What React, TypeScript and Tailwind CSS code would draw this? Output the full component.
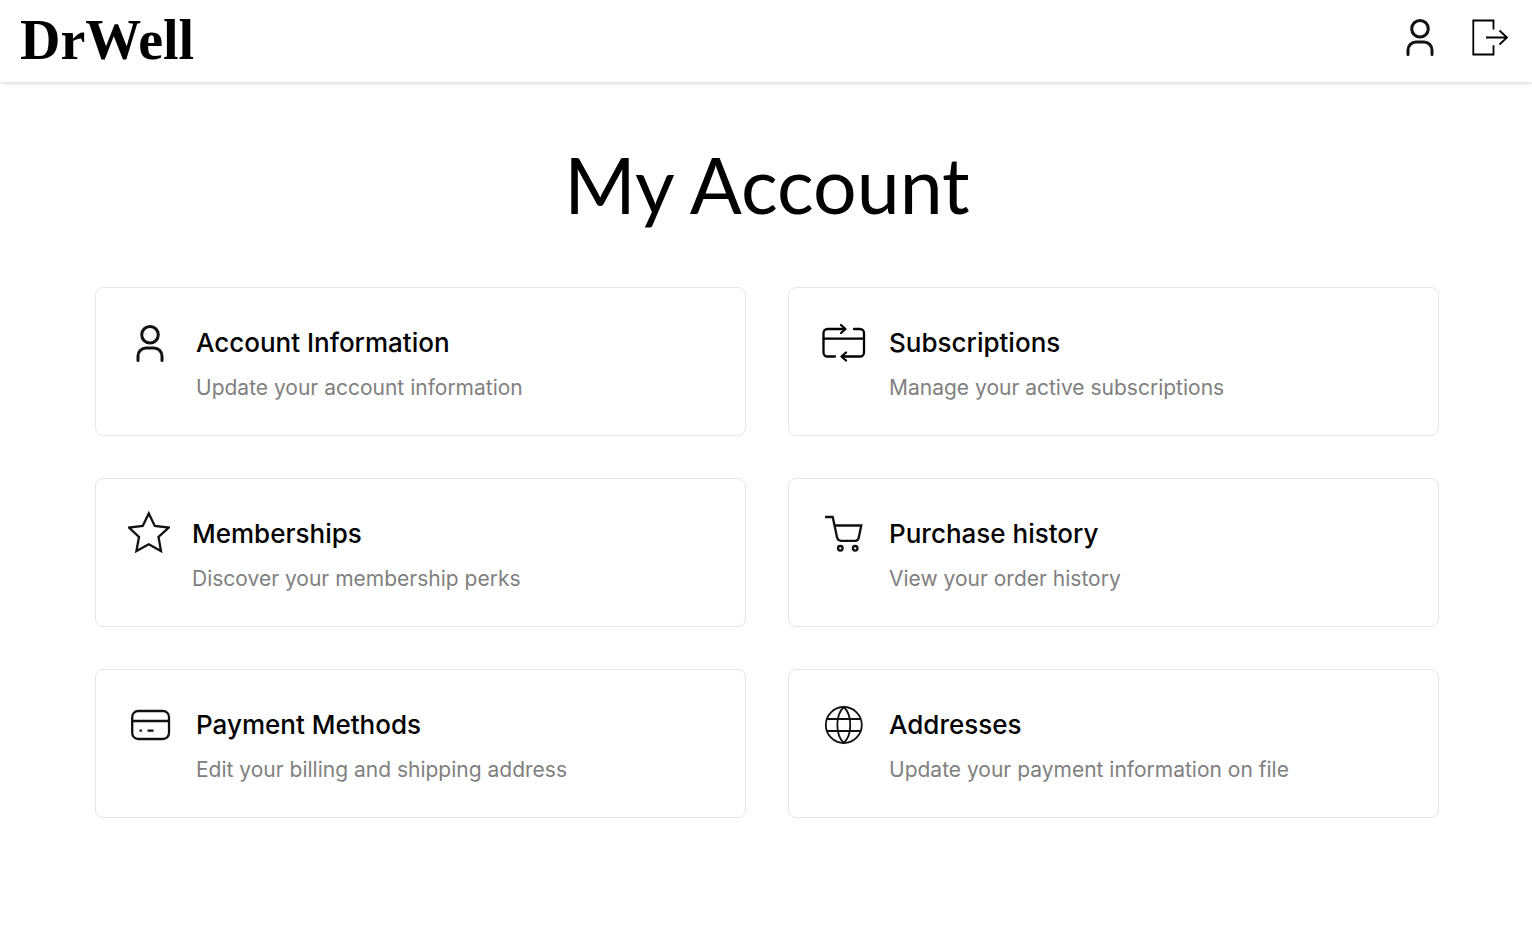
import type { ReactNode, SVGProps } from 'react';

const Icon = ({ children, ...props }: SVGProps<SVGSVGElement> & { children: ReactNode }) => (
  <svg
    viewBox="0 0 46 46"
    fill="none"
    stroke="#111111"
    strokeWidth="2.3"
    aria-hidden="true"
    className="size-[46px] shrink-0"
    {...props}
  >
    {children}
  </svg>
);

const UserIcon = () => (
  <Icon strokeWidth="3" strokeLinecap="round">
    <circle cx="22" cy="14.7" r="8.3" />
    <path d="M10 40.5v-4.5a8 8 0 0 1 8-8h8a8 8 0 0 1 8 8v4.5" />
  </Icon>
);

const LogoutIcon = () => (
  <Icon strokeWidth="1.8" stroke="#000000">
    <path d="M25.5 15.5V6.5H5.3v34h20.2v-9.3" />
    <path d="M18 23.5h21M31.5 16.5l7.5 7-7.5 7" />
  </Icon>
);

const SubscriptionIcon = () => (
  <Icon stroke="#000000" strokeLinecap="round" strokeLinejoin="round">
    <path d="M23.5 9H6.5a4 4 0 0 0-4 4v19.5a4 4 0 0 0 4 4h7.5" />
    <path d="M33 9h6a4 4 0 0 1 4 4v19.5a4 4 0 0 1-4 4H22" />
    <path d="M2.5 18.7h40.5M20 5l4.5 4-4.5 4M25 32.5l-4.5 4 4.5 4" />
  </Icon>
);

const StarIcon = () => (
  <Icon viewBox="0 0 42 42" className="size-[42px] shrink-0">
    <path d="M20.8 2.4l6 12.6 14 1.6-10.3 9.4 2.5 14.1-12.2-6.8-12.4 6.8L11 26 .9 16.6l13.8-1.6z" />
  </Icon>
);

const CartIcon = () => (
  <Icon>
    <path d="M4 6h7.7l4.4 20.6a4 4 0 0 0 3.9 3.2h14.2a3.6 3.6 0 0 0 3.5-3l2.6-12.3H13.3" />
    <circle cx="19.3" cy="37.3" r="2.3" />
    <circle cx="34.2" cy="37.3" r="2.3" />
  </Icon>
);

const CardIcon = () => (
  <Icon>
    <rect x="4.2" y="9" width="36.8" height="28" rx="6" />
    <path d="M4.2 19h36.8" />
    <path d="M11.5 28.6h2.4M19.5 28.6h6" />
  </Icon>
);

const GlobeIcon = () => (
  <Icon strokeWidth="1.8">
    <circle cx="22.8" cy="23" r="18" />
    <path d="M22.8 5c-8.6 8-8.6 28 0 36 8.6-8 8.6-28 0-36z" />
    <path d="M6 17h33.6M6 29h33.6" />
  </Icon>
);

const links = [
  { title: 'Account Information', text: 'Update your account information', icon: UserIcon },
  { title: 'Subscriptions', text: 'Manage your active subscriptions', icon: SubscriptionIcon },
  { title: 'Memberships', text: 'Discover your membership perks', icon: StarIcon },
  { title: 'Purchase history', text: 'View your order history', icon: CartIcon },
  { title: 'Payment Methods', text: 'Edit your billing and shipping address', icon: CardIcon },
  { title: 'Addresses', text: 'Update your payment information on file', icon: GlobeIcon },
];

const App = () => {
  return (
    <div className="min-h-screen bg-white text-black font-['Inter',sans-serif]">
      <header className="flex h-[82px] items-center justify-between pl-5 pr-[18px] pb-2 shadow-[0_1px_4px_rgba(0,0,0,0.18)]">
        <a href="#" className="pt-1.5 font-['Liberation_Serif',serif] text-[56px] leading-[60px] font-bold">
          DrWell
        </a>
        <nav className="flex items-center gap-6">
          <a href="#account" aria-label="Account">
            <UserIcon />
          </a>
          <button type="button" aria-label="Log out">
            <LogoutIcon />
          </button>
        </nav>
      </header>

      <main className="pl-[26px] pr-6 pt-[52px] pb-28">
        <h1 className="text-center font-['Lato',sans-serif] text-[77px] leading-[100px]">My Account</h1>

        {/* Account links */}
        <div className="mx-auto mt-[53px] grid max-w-[1344px] gap-[42px] md:grid-cols-2">
          {links.map((link) => (
            <a
              key={link.title}
              href="#"
              className="flex items-start gap-[22px] rounded-lg border border-[#e6e6e6] p-8"
            >
              <link.icon />
              <div>
                <h2 className="text-[26px] leading-[46px] font-medium">{link.title}</h2>
                <p className="mt-1.5 text-[21px] leading-[31px] text-[#808080]">{link.text}</p>
              </div>
            </a>
          ))}
        </div>
      </main>
    </div>
  );
};

export default App;
